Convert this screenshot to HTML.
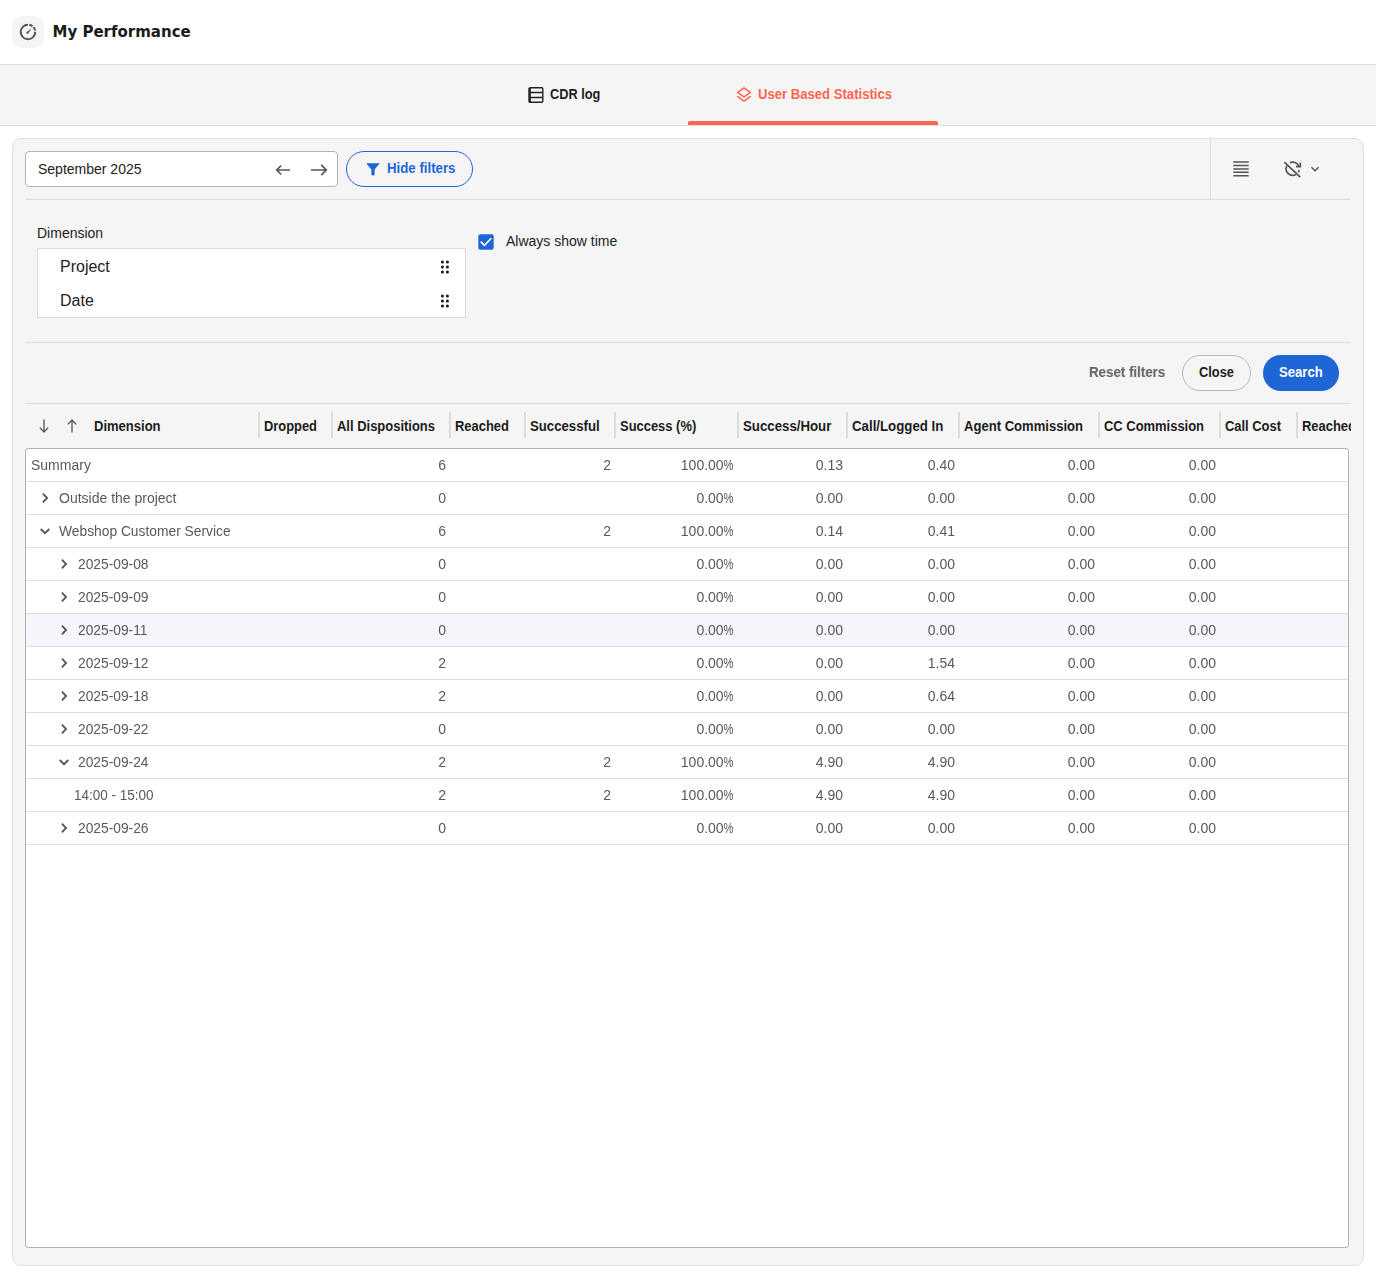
<!DOCTYPE html>
<html lang="en">
<head>
<meta charset="utf-8">
<title>My Performance</title>
<style>
*{box-sizing:border-box;margin:0;padding:0}
html,body{width:1376px;height:1278px;overflow:hidden;background:#fff}
body{font-family:"Liberation Sans",sans-serif;font-size:14px;color:#222;position:relative}
.abs{position:absolute}
.sx{display:inline-block;transform-origin:0 50%;white-space:nowrap}
#top{position:absolute;left:0;top:0;width:1376px;height:64px;background:#fff}
#ico{position:absolute;left:12px;top:16px;width:32px;height:32px;border-radius:9px;background:#f5f5f5}
#ico svg{position:absolute;left:7px;top:7px;width:18px;height:18px}
#title{position:absolute;left:52.5px;top:22px;font-family:"DejaVu Sans","Liberation Sans",sans-serif;font-weight:bold;font-size:15px;line-height:20px;color:#1a1a1a;white-space:nowrap}
#tabs{position:absolute;left:0;top:64px;width:1376px;height:62px;background:#f5f5f5;border-top:1px solid #dcdcdc;border-bottom:1px solid #dcdcdc}
.tab{position:absolute;top:0;height:60px;font-weight:bold;font-size:14px;line-height:20px;white-space:nowrap}
.tab span{position:absolute;top:19px}
.tab svg{position:absolute}
#uline{position:absolute;left:688px;top:56px;width:250px;height:4px;background:#ff6650;border-radius:2px 2px 0 0}
#panel{position:absolute;left:12px;top:138px;width:1352px;height:1128px;background:#f5f5f5;border:1px solid #e0e0e0;border-radius:9px}
/* coordinates inside #inner are page coords minus (25,139) */
#inner{position:absolute;left:12px;top:0;width:1326px;height:1126px}
.hr{position:absolute;left:0;width:1326px;height:1px;background:#dcdcdc}
#vr{position:absolute;left:1185px;top:0;width:1px;height:60px;background:#dcdcdc}
#month{position:absolute;left:0;top:12px;width:313px;height:36px;background:#fff;border:1px solid #b4b4b4;border-radius:4px}
#month span{position:absolute;left:12px;top:7px;font-size:14px;line-height:20px;color:#222}
#month svg{position:absolute}
#hide{position:absolute;left:321px;top:12px;width:127px;height:36px;border:1px solid #1e66d6;border-radius:18px;color:#1e66d6;font-weight:bold}
#hide span{position:absolute;left:40px;top:6px;line-height:20px;white-space:nowrap}
#hide svg{position:absolute;left:18px;top:9px;width:16px;height:16px}
.g{stroke:#555;fill:none}
#dimlbl{position:absolute;left:12px;top:84px;line-height:20px;color:#222}
#dimbox{position:absolute;left:12px;top:109px;width:429px;height:70px;background:#fff;border:1px solid #dcdcdc}
.di{position:absolute;left:0;width:427px;height:34px;font-size:16px;line-height:34px;color:#222}
.di span{position:absolute;left:22px;top:1px}
.di svg{position:absolute;left:402px;top:9px;width:12px;height:18px}
#cb{position:absolute;left:453px;top:95px;width:17px;height:17px}
#cb svg{position:absolute;left:0;top:0;width:17px;height:17px}
#cblbl{position:absolute;left:481px;top:92px;line-height:20px;color:#222;white-space:nowrap}
#reset{position:absolute;left:1064px;top:223px;line-height:20px;font-weight:bold;color:#666;white-space:nowrap}
#close{position:absolute;left:1157px;top:216px;width:69px;height:36px;border:1px solid #b8b8b8;border-radius:18px;font-weight:bold;color:#222;line-height:34px}
#close span{position:absolute;left:16px;top:-1px}
#search{position:absolute;left:1238px;top:216px;width:76px;height:36px;border-radius:18px;background:#1e66d6;font-weight:bold;color:#fff;line-height:36px}
#search span{position:absolute;left:16px;top:-1px}
#thead{position:absolute;left:0;top:265px;width:1326px;height:44px;overflow:hidden}
.th{position:absolute;top:12px;line-height:20px;font-weight:bold;color:#1c1c1c;white-space:nowrap}
.sep{position:absolute;top:8px;width:2px;height:26px;background:#dcdcdc}
#thead svg{position:absolute}
#grid{position:absolute;left:0;top:309px;width:1324px;height:800px;background:#fff;border:1px solid #b0b0b0;border-radius:3px;overflow:hidden}
.row{will-change:transform;position:absolute;left:0;width:1322px;height:33px;border-bottom:1px solid #dcdcdc;color:#595959;line-height:32px;white-space:nowrap}
.row.hl{background:#f5f6fb}
.lbl{position:absolute;top:0}
.num{position:absolute;top:0;text-align:right}
.pc{display:inline-block;transform:scaleX(.8);transform-origin:100% 50%;margin-left:-2.6px}
.chev{position:absolute;top:10px;width:12px;height:12px;fill:none;stroke:#555;stroke-width:1.8}
</style>
</head>
<body>
<div id="top">
  <div id="ico"><svg viewBox="0 0 18 18" fill="none" stroke="#555" stroke-width="2"><path d="M9 1.7 A7.3 7.3 0 1 0 16.3 9"/><path d="M9 1.7 A7.3 7.3 0 0 1 16.3 9" stroke-dasharray="3.6 1.3" stroke-dashoffset="-1.3"/><path d="M7.6 8.9 L12.5 5.5 L9.2 10.5 Q8.4 11.3 7.6 10.5 Q6.8 9.7 7.6 8.9 Z" fill="#555" stroke="none"/></svg></div>
  <div id="title">My Performance</div>
</div>
<div id="tabs">
  <div class="tab" style="left:528px;color:#1c1c1c">
    <svg style="left:0;top:22px;width:16px;height:16px" viewBox="0 0 16 16" fill="none" stroke="#222" stroke-width="1.4"><rect x="1.2" y="0.7" width="13.6" height="14.6" rx="1.2"/><path d="M1.5 5.5H15M1.5 10.5H15" stroke-width="1.5"/><path d="M1.7 0.8V15.2" stroke-width="2.3"/></svg>
    <span class="sx" style="left:22px;transform:scaleX(.91)">CDR log</span>
  </div>
  <div class="tab" style="left:736px;color:#ff6650">
    <svg style="left:0;top:22px;width:16px;height:16px" viewBox="0 0 16 16" fill="none" stroke="#ff6650" stroke-width="1.5" stroke-linejoin="round" stroke-linecap="round"><path d="M8 0.8 L14.3 5.4 L8 10 L1.7 5.4 Z"/><path d="M1.7 9.6 L8 14.2 L14.3 9.6"/></svg>
    <span class="sx" style="left:22px;transform:scaleX(.936)">User Based Statistics</span>
  </div>
  <div id="uline"></div>
</div>
<div id="panel"><div id="inner">
  <div id="month"><span>September 2025</span>
    <svg style="left:249px;top:10px;width:16px;height:16px" viewBox="0 0 16 16" class="g" stroke-width="1.7"><path d="M15 8H1.7M6.2 3.5L1.7 8L6.2 12.5"/></svg>
    <svg style="left:284px;top:10px;width:18px;height:16px" viewBox="0 0 18 16" class="g" stroke-width="1.7"><path d="M1 8H16.3M11.2 2.9L16.3 8L11.2 13.1"/></svg>
  </div>
  <div id="hide"><svg viewBox="0 0 16 16"><path d="M1.2 2.2 H14.8 L9.6 8.6 V13.2 Q9.6 14.4 8 14.4 Q6.4 14.4 6.4 13.2 V8.6 Z" fill="#1e66d6"/></svg><span class="sx" style="transform:scaleX(.946)">Hide filters</span></div>
  <div id="vr"></div>
  <svg class="abs" style="left:1208px;top:22px;width:16px;height:16px" viewBox="0 0 16 16" stroke="#555" stroke-width="1.5"><path d="M0.3 1H15.7M0.3 4.5H15.7M0.3 7.9H15.7M0.3 11.3H15.7M0.3 14.8H15.7"/></svg>
  <svg class="abs" style="left:1259px;top:21px;width:19px;height:19px" viewBox="0 0 19 19" fill="none" stroke="#555" stroke-width="1.7"><path d="M2.87 5.6 A6.6 6.6 0 0 0 11.9 14.47"/><path d="M5.91 2.72 A6.6 6.6 0 0 1 14.82 6.23"/><path d="M15.16 10.07 A6.6 6.6 0 0 1 14.3 12.2"/><path d="M16.3 2.4 V6.7 H12"/><path d="M0.4 2.2 L16.2 17.2"/></svg>
  <svg class="abs" style="left:1285px;top:26px;width:10px;height:8px" viewBox="0 0 10 8" fill="none" stroke="#555" stroke-width="1.5"><path d="M1.5 2.3 L5 5.8 L8.5 2.3"/></svg>
  <div class="hr" style="top:60px"></div>
  <div id="dimlbl">Dimension</div>
  <div id="dimbox">
    <div class="di" style="top:0"><span>Project</span><svg viewBox="0 0 12 18" fill="#1a1a1a"><circle cx="2.4" cy="4" r="1.55"/><circle cx="7.4" cy="4" r="1.55"/><circle cx="2.4" cy="9" r="1.55"/><circle cx="7.4" cy="9" r="1.55"/><circle cx="2.4" cy="14" r="1.55"/><circle cx="7.4" cy="14" r="1.55"/></svg></div>
    <div class="di" style="top:34px"><span>Date</span><svg viewBox="0 0 12 18" fill="#1a1a1a"><circle cx="2.4" cy="4" r="1.55"/><circle cx="7.4" cy="4" r="1.55"/><circle cx="2.4" cy="9" r="1.55"/><circle cx="7.4" cy="9" r="1.55"/><circle cx="2.4" cy="14" r="1.55"/><circle cx="7.4" cy="14" r="1.55"/></svg></div>
  </div>
  <div id="cb"><svg viewBox="0 0 17 17"><rect x=".3" y=".25" width="15.4" height="15.4" rx="2" fill="#1e66d6"/><path d="M2.7 7.65 L6.4 11.35 L13.3 4.25" fill="none" stroke="#fff" stroke-width="1.7"/></svg></div>
  <div id="cblbl">Always show time</div>
  <div class="hr" style="top:203px"></div>
  <div id="reset" class="sx" style="transform:scaleX(.95)">Reset filters</div>
  <div id="close"><span class="sx" style="transform:scaleX(.917)">Close</span></div>
  <div id="search"><span class="sx" style="transform:scaleX(.936)">Search</span></div>
  <div class="hr" style="top:264px"></div>
  <div id="thead">
    <svg style="left:14px;top:15px;width:10px;height:14px" viewBox="0 0 10 14" class="g" stroke-width="1.3"><path d="M5 0.5V13M0.8 8.6L5 13L9.2 8.6"/></svg>
    <svg style="left:42px;top:15px;width:10px;height:14px" viewBox="0 0 10 14" class="g" stroke-width="1.3"><path d="M5 13.5V1M0.8 5.4L5 1L9.2 5.4"/></svg>
    <span class="th sx" style="left:69px;transform:scaleX(.93)">Dimension</span>
<i class="sep" style="left:233px"></i>
<i class="sep" style="left:306px"></i>
<i class="sep" style="left:424px"></i>
<i class="sep" style="left:499px"></i>
<i class="sep" style="left:589px"></i>
<i class="sep" style="left:712px"></i>
<i class="sep" style="left:821px"></i>
<i class="sep" style="left:933px"></i>
<i class="sep" style="left:1073px"></i>
<i class="sep" style="left:1194px"></i>
<i class="sep" style="left:1271px"></i>
<span class="th sx" style="left:239px;transform:scaleX(0.92)">Dropped</span>
<span class="th sx" style="left:312px;transform:scaleX(0.926)">All Dispositions</span>
<span class="th sx" style="left:430px;transform:scaleX(0.925)">Reached</span>
<span class="th sx" style="left:505px;transform:scaleX(0.942)">Successful</span>
<span class="th sx" style="left:595px;transform:scaleX(0.924)">Success (%)</span>
<span class="th sx" style="left:718px;transform:scaleX(0.946)">Success/Hour</span>
<span class="th sx" style="left:827px;transform:scaleX(0.947)">Call/Logged In</span>
<span class="th sx" style="left:939px;transform:scaleX(0.933)">Agent Commission</span>
<span class="th sx" style="left:1079px;transform:scaleX(0.925)">CC Commission</span>
<span class="th sx" style="left:1200px;transform:scaleX(0.923)">Call Cost</span>
<span class="th sx" style="left:1277px;transform:scaleX(0.925)">Reached</span>
  </div>
  <div id="grid">
<div class="row" style="top:0px"><span class="lbl" style="left:5px">Summary</span><span class="num" style="right:902px">6</span><span class="num" style="right:737px">2</span><span class="num" style="right:614.5px">100.00<span class="pc">%</span></span><span class="num" style="right:505px">0.13</span><span class="num" style="right:393px">0.40</span><span class="num" style="right:253px">0.00</span><span class="num" style="right:132px">0.00</span></div>
<div class="row" style="top:33px"><svg class="chev" style="left:13.299999999999997px" viewBox="0 0 12 12"><path d="M3.9 1.7 L8.1 6 L3.9 10.3"/></svg><span class="lbl" style="left:33px">Outside the project</span><span class="num" style="right:902px">0</span><span class="num" style="right:614.5px">0.00<span class="pc">%</span></span><span class="num" style="right:505px">0.00</span><span class="num" style="right:393px">0.00</span><span class="num" style="right:253px">0.00</span><span class="num" style="right:132px">0.00</span></div>
<div class="row" style="top:66px"><svg class="chev" style="left:13.299999999999997px" viewBox="0 0 12 12"><path d="M1.7 4 L6 8.2 L10.3 4"/></svg><span class="lbl sx" style="left:33px;transform:scaleX(0.986)">Webshop Customer Service</span><span class="num" style="right:902px">6</span><span class="num" style="right:737px">2</span><span class="num" style="right:614.5px">100.00<span class="pc">%</span></span><span class="num" style="right:505px">0.14</span><span class="num" style="right:393px">0.41</span><span class="num" style="right:253px">0.00</span><span class="num" style="right:132px">0.00</span></div>
<div class="row" style="top:99px"><svg class="chev" style="left:32.3px" viewBox="0 0 12 12"><path d="M3.9 1.7 L8.1 6 L3.9 10.3"/></svg><span class="lbl sx" style="left:52px;transform:scaleX(0.985)">2025-09-08</span><span class="num" style="right:902px">0</span><span class="num" style="right:614.5px">0.00<span class="pc">%</span></span><span class="num" style="right:505px">0.00</span><span class="num" style="right:393px">0.00</span><span class="num" style="right:253px">0.00</span><span class="num" style="right:132px">0.00</span></div>
<div class="row" style="top:132px"><svg class="chev" style="left:32.3px" viewBox="0 0 12 12"><path d="M3.9 1.7 L8.1 6 L3.9 10.3"/></svg><span class="lbl sx" style="left:52px;transform:scaleX(0.985)">2025-09-09</span><span class="num" style="right:902px">0</span><span class="num" style="right:614.5px">0.00<span class="pc">%</span></span><span class="num" style="right:505px">0.00</span><span class="num" style="right:393px">0.00</span><span class="num" style="right:253px">0.00</span><span class="num" style="right:132px">0.00</span></div>
<div class="row hl" style="top:165px"><svg class="chev" style="left:32.3px" viewBox="0 0 12 12"><path d="M3.9 1.7 L8.1 6 L3.9 10.3"/></svg><span class="lbl sx" style="left:52px;transform:scaleX(0.985)">2025-09-11</span><span class="num" style="right:902px">0</span><span class="num" style="right:614.5px">0.00<span class="pc">%</span></span><span class="num" style="right:505px">0.00</span><span class="num" style="right:393px">0.00</span><span class="num" style="right:253px">0.00</span><span class="num" style="right:132px">0.00</span></div>
<div class="row" style="top:198px"><svg class="chev" style="left:32.3px" viewBox="0 0 12 12"><path d="M3.9 1.7 L8.1 6 L3.9 10.3"/></svg><span class="lbl sx" style="left:52px;transform:scaleX(0.985)">2025-09-12</span><span class="num" style="right:902px">2</span><span class="num" style="right:614.5px">0.00<span class="pc">%</span></span><span class="num" style="right:505px">0.00</span><span class="num" style="right:393px">1.54</span><span class="num" style="right:253px">0.00</span><span class="num" style="right:132px">0.00</span></div>
<div class="row" style="top:231px"><svg class="chev" style="left:32.3px" viewBox="0 0 12 12"><path d="M3.9 1.7 L8.1 6 L3.9 10.3"/></svg><span class="lbl sx" style="left:52px;transform:scaleX(0.985)">2025-09-18</span><span class="num" style="right:902px">2</span><span class="num" style="right:614.5px">0.00<span class="pc">%</span></span><span class="num" style="right:505px">0.00</span><span class="num" style="right:393px">0.64</span><span class="num" style="right:253px">0.00</span><span class="num" style="right:132px">0.00</span></div>
<div class="row" style="top:264px"><svg class="chev" style="left:32.3px" viewBox="0 0 12 12"><path d="M3.9 1.7 L8.1 6 L3.9 10.3"/></svg><span class="lbl sx" style="left:52px;transform:scaleX(0.985)">2025-09-22</span><span class="num" style="right:902px">0</span><span class="num" style="right:614.5px">0.00<span class="pc">%</span></span><span class="num" style="right:505px">0.00</span><span class="num" style="right:393px">0.00</span><span class="num" style="right:253px">0.00</span><span class="num" style="right:132px">0.00</span></div>
<div class="row" style="top:297px"><svg class="chev" style="left:32.3px" viewBox="0 0 12 12"><path d="M1.7 4 L6 8.2 L10.3 4"/></svg><span class="lbl sx" style="left:52px;transform:scaleX(0.985)">2025-09-24</span><span class="num" style="right:902px">2</span><span class="num" style="right:737px">2</span><span class="num" style="right:614.5px">100.00<span class="pc">%</span></span><span class="num" style="right:505px">4.90</span><span class="num" style="right:393px">4.90</span><span class="num" style="right:253px">0.00</span><span class="num" style="right:132px">0.00</span></div>
<div class="row" style="top:330px"><span class="lbl sx" style="left:48px;transform:scaleX(0.964)">14:00 - 15:00</span><span class="num" style="right:902px">2</span><span class="num" style="right:737px">2</span><span class="num" style="right:614.5px">100.00<span class="pc">%</span></span><span class="num" style="right:505px">4.90</span><span class="num" style="right:393px">4.90</span><span class="num" style="right:253px">0.00</span><span class="num" style="right:132px">0.00</span></div>
<div class="row" style="top:363px"><svg class="chev" style="left:32.3px" viewBox="0 0 12 12"><path d="M3.9 1.7 L8.1 6 L3.9 10.3"/></svg><span class="lbl sx" style="left:52px;transform:scaleX(0.985)">2025-09-26</span><span class="num" style="right:902px">0</span><span class="num" style="right:614.5px">0.00<span class="pc">%</span></span><span class="num" style="right:505px">0.00</span><span class="num" style="right:393px">0.00</span><span class="num" style="right:253px">0.00</span><span class="num" style="right:132px">0.00</span></div>
  </div>
</div></div>
</body>
</html>
